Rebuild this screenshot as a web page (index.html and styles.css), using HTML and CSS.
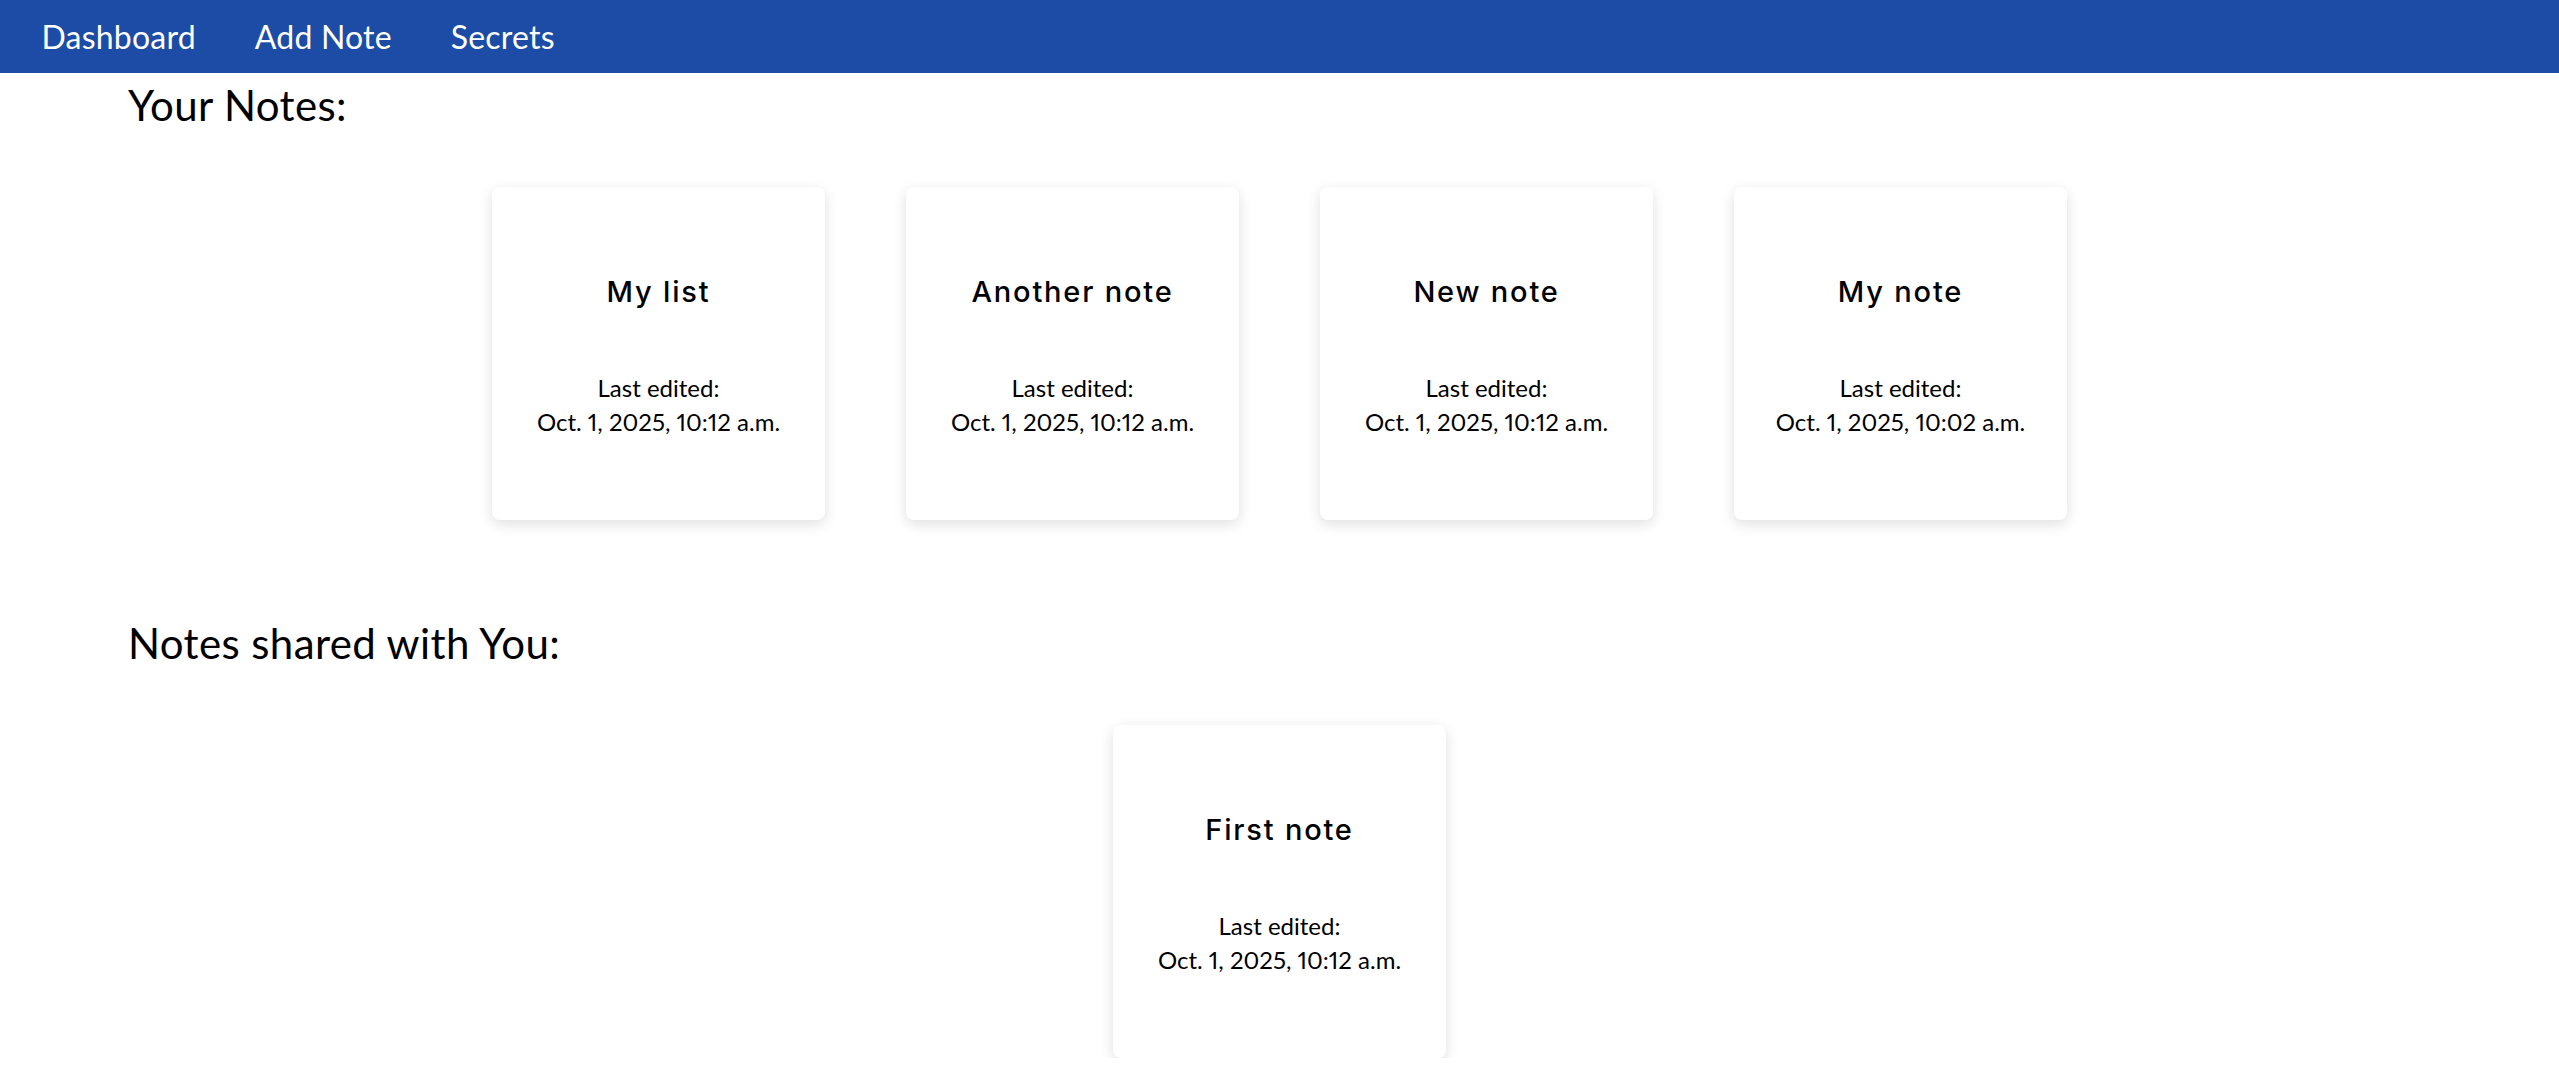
FILE: index.html
```html
<!DOCTYPE html>
<html lang="en">
<head>
<meta charset="utf-8">
<title>Notes</title>
<link rel="stylesheet" href="styles.css">
</head>
<body>
<nav class="navbar">
  <a class="nav-link" href="#">Dashboard</a>
  <a class="nav-link" href="#">Add Note</a>
  <a class="nav-link" href="#">Secrets</a>
</nav>
<main class="content">
  <section class="section">
    <h1 class="section-title">Your Notes:</h1>
    <div class="card-row">
      <div class="card"><h3 class="card-title">My list</h3><p class="card-meta">Last edited:<br>Oct. 1, 2025, 10:12 a.m.</p></div>
      <div class="card"><h3 class="card-title">Another note</h3><p class="card-meta">Last edited:<br>Oct. 1, 2025, 10:12 a.m.</p></div>
      <div class="card"><h3 class="card-title">New note</h3><p class="card-meta">Last edited:<br>Oct. 1, 2025, 10:12 a.m.</p></div>
      <div class="card"><h3 class="card-title">My note</h3><p class="card-meta">Last edited:<br>Oct. 1, 2025, 10:02 a.m.</p></div>
    </div>
  </section>
  <section class="section section-shared">
    <h1 class="section-title">Notes shared with You:</h1>
    <div class="card-row">
      <div class="card"><h3 class="card-title">First note</h3><p class="card-meta">Last edited:<br>Oct. 1, 2025, 10:12 a.m.</p></div>
    </div>
  </section>
</main>
</body>
</html>
```

FILE: styles.css
```css
* { box-sizing: border-box; }

html, body {
  margin: 0;
  padding: 0;
  background: #ffffff;
  color: #000000;
  font-family: "Lato", "Open Sans", sans-serif;
  font-weight: 400;
}

.navbar {
  height: 73px;
  background: #1c4ca5;
  display: flex;
  align-items: center;
  padding-left: 12px;
}

.nav-link {
  color: #ffffff;
  text-decoration: none;
  font-size: 32px;
  padding: 0 29.5px;
  line-height: 40px;
  letter-spacing: 0.2px;
}

.content {
  padding: 0;
}

.section-title {
  margin: 7px 0 0 5%;
  font-weight: 400;
  font-size: 42px;
  line-height: 50px;
  letter-spacing: 0.4px;
}

.section-shared {
  margin-top: 98px;
}

.section-shared .section-title {
  margin-top: 0;
}

.card-row {
  margin-top: 57px;
  display: flex;
  justify-content: center;
  gap: 81px;
}

.card {
  width: 333px;
  height: 333px;
  background: #ffffff;
  border-radius: 8px;
  box-shadow: 0 4px 14px rgba(0, 0, 0, 0.13);
  padding-top: 85px;
  text-align: center;
}

.card-title {
  margin: 0 0 59px;
  font-family: "Inter", "Noto Sans", sans-serif;
  font-weight: 500;
  font-size: 29px;
  line-height: 40px;
  letter-spacing: 1.8px;
}

.card-meta {
  margin: 0;
  font-size: 24px;
  line-height: 34px;
  font-variant-numeric: proportional-nums;
}
```
